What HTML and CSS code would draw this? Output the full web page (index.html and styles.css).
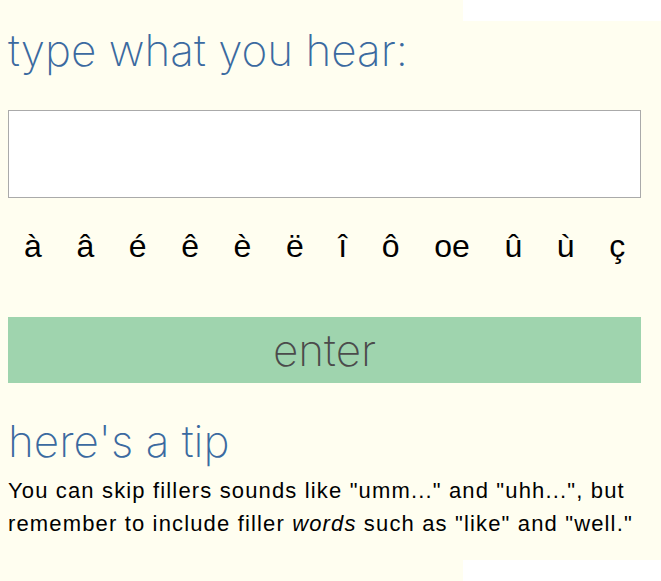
FILE: index.html
```html
<!DOCTYPE html>
<html>
<head>
<meta charset="utf-8">
<link rel="stylesheet" href="styles.css">
</head>
<body>
<main class="page">
  <h1 class="title">type what you hear:</h1>
  <input class="answer" type="text">
  <div class="accents">
    <span class="accent">à</span>
    <span class="accent">â</span>
    <span class="accent">é</span>
    <span class="accent">ê</span>
    <span class="accent">è</span>
    <span class="accent">ë</span>
    <span class="accent">î</span>
    <span class="accent">ô</span>
    <span class="accent">oe</span>
    <span class="accent">û</span>
    <span class="accent">ù</span>
    <span class="accent">ç</span>
  </div>
  <button class="enter">enter</button>
  <h2 class="tip-title">here's a tip</h2>
  <p class="tip">You can skip fillers sounds like "umm..." and "uhh...", but remember to include filler <em>words</em> such as "like" and "well."</p>
</main>
</body>
</html>
```

FILE: styles.css
```css
html {
  background: linear-gradient(to right, #fffef0 463px, #ffffff 463px);
  height: 100%;
}
body {
  margin: 0;
}
.page {
  background: #fffef0;
  margin-top: 21px;
  height: 539px;
  padding: 0 20px 0 8px;
  box-sizing: border-box;
  display: flex;
  flex-direction: column;
  align-items: stretch;
}
.title, .tip-title {
  font-family: Inter, Roboto, "Liberation Sans", sans-serif;
  font-weight: 200;
  font-size: 44px;
  line-height: 52px;
  color: #3b6aa0;
  margin: 3px 0 0 0;
}
.answer {
  margin-top: 34px;
  height: 88px;
  box-sizing: border-box;
  border: 1px solid #aaaaaa;
  background: #ffffff;
  padding: 0 8px;
  font-size: 24px;
  outline: none;
}
.accents {
  margin-top: 30px;
  display: flex;
  gap: 34.6px;
  padding-left: 16px;
  font-family: "Liberation Sans", Arial, sans-serif;
  font-size: 32px;
  line-height: 36px;
  color: #000;
}
.enter {
  margin-top: 53px;
  height: 66px;
  border: none;
  background: #9fd4ae;
  font-family: Inter, Roboto, "Liberation Sans", sans-serif;
  font-weight: 200;
  font-size: 44px;
  line-height: 66px;
  color: #4b4b4b;
  padding: 0;
}
.tip-title {
  margin-top: 32px;
}
.tip {
  margin: 7px 0 0 0;
  font-family: "Liberation Sans", Arial, sans-serif;
  font-size: 22px;
  line-height: 33px;
  letter-spacing: 1.15px;
  color: #000;
}
```
